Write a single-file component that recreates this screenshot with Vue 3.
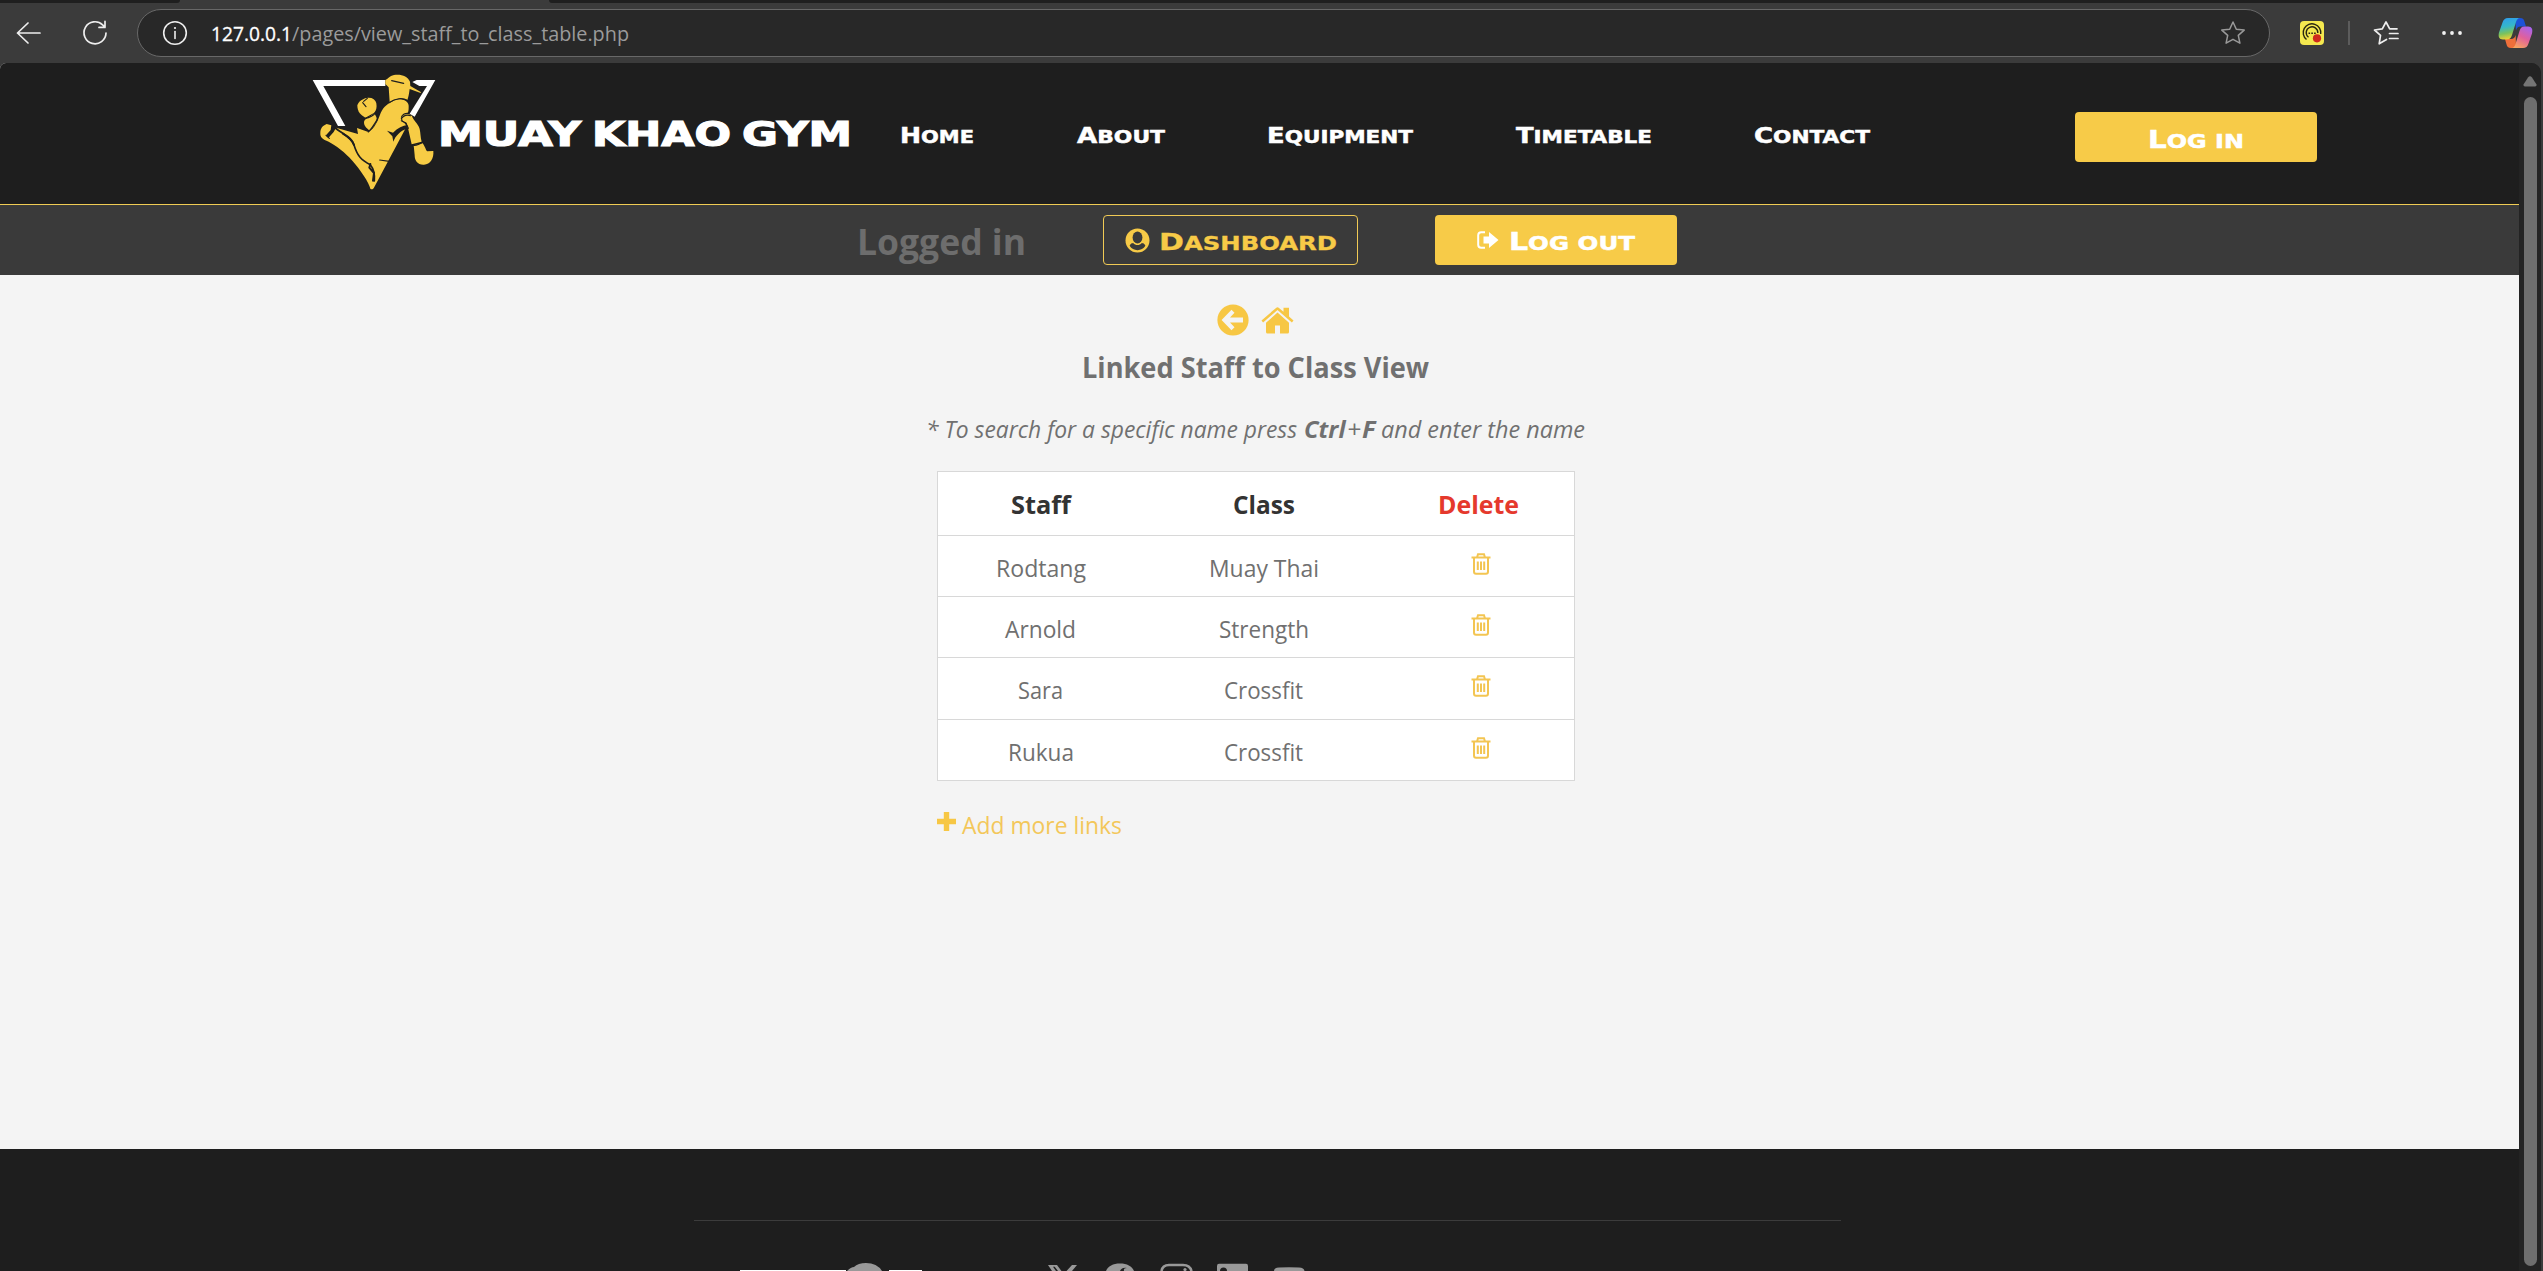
<script setup>
import { h } from 'vue'

const UI = '"Open Sans", "Noto Sans", sans-serif'
const DISPLAY = '"DejaVu Sans", sans-serif'

// One line of text set to an exact width; parts: [text, size, weight]
const FitText = (props) => {
  const { parts, w, hgt = 32, cap, dy = 0, color = '#fff', face = UI, slant = 'normal', heavy = 0 } = props
  return h('svg', { width: w, height: hgt, style: { display: 'block', overflow: 'visible', flex: 'none' } }, [
    h('text', {
      x: 0, y: hgt / 2 + cap / 2 + dy, textLength: w, lengthAdjust: 'spacingAndGlyphs', fill: color,
      stroke: heavy ? color : 'none', 'stroke-width': heavy,
      style: { fontFamily: face, fontStyle: slant, whiteSpace: 'pre' }
    }, parts.map(([t, size, weight = 400]) => h('tspan', { 'font-size': size, 'font-weight': weight }, t)))
  ])
}
FitText.props = ['parts', 'w', 'hgt', 'cap', 'dy', 'color', 'face', 'slant', 'heavy']

const caps = (word) => [[word[0], 21.6, 700], [word.slice(1).toUpperCase(), 18, 700]]

const brand = [
  { word: 'MUAY', w: 143 },
  { word: 'KHAO', w: 139 },
  { word: 'GYM', w: 110 }
]
const hint = [
  { text: '* To search for a specific name press', w: 371, gap: 0, weight: 400 },
  { text: 'Ctrl', w: 41.5, gap: 7, weight: 700 },
  { text: '+', w: 14, gap: 1, weight: 400 },
  { text: 'F', w: 13.5, gap: 1, weight: 700 },
  { text: 'and enter the name', w: 204, gap: 6, weight: 400 }
]
const nav = [
  { label: 'Home', w: 74, gap: 0 },
  { label: 'About', w: 88, gap: 103 },
  { label: 'Equipment', w: 146, gap: 102 },
  { label: 'Timetable', w: 136, gap: 103 },
  { label: 'Contact', w: 116, gap: 102 }
]
const rows = [
  { staff: 'Rodtang', sw: 90, cls: 'Muay Thai', cw: 110 },
  { staff: 'Arnold', sw: 71, cls: 'Strength', cw: 90 },
  { staff: 'Sara', sw: 45, cls: 'Crossfit', cw: 79 },
  { staff: 'Rukua', sw: 66, cls: 'Crossfit', cw: 79 }
]
</script>

<template>
  <div class="window">
    <div class="tabstrip"><i class="strip left"></i><i class="tab"></i><i class="strip right"></i></div>
    <div class="toolbar">
      <svg class="back" width="25" height="24" viewBox="0 0 25 24"><path d="M24 12H1.5M12 2 1.5 12 12 22" fill="none" stroke="#eee" stroke-width="1.7" stroke-linecap="round" stroke-linejoin="round"/></svg>
      <svg class="reload" width="26" height="26" viewBox="0 0 26 26"><path d="M24 13a11 11 0 1 1-3.4-8.2L23 7.2M23 1.4v6h-6" fill="none" stroke="#eee" stroke-width="1.7" stroke-linecap="round" stroke-linejoin="round"/></svg>
      <div class="address">
        <svg width="26" height="26" viewBox="0 0 26 26"><circle cx="13" cy="13" r="11.3" fill="none" stroke="#eee" stroke-width="1.6"/><path d="M13 11.5v7" stroke="#eee" stroke-width="1.6" stroke-linecap="round"/><circle cx="13" cy="8" r="1.1" fill="#eee"/></svg>
        <div class="url">
          <FitText :parts="[['127.0.0.1', 19.8]]" :w="81" :cap="14.5" :dy="1" :heavy="0.3" />
          <FitText :parts="[['/pages/view_staff_to_class_table.php', 19.8]]" :w="337" :cap="14.5" :dy="1" color="#9b9b9b" />
        </div>
        <svg class="star" width="26" height="26" viewBox="0 0 26 26"><path d="M13 2l3.3 7.2 7.9.9-5.9 5.3 1.6 7.8-6.9-3.9-6.9 3.9 1.6-7.8L1.8 10.1l7.9-.9z" fill="none" stroke="#999" stroke-width="1.5" stroke-linejoin="round"/></svg>
      </div>
      <svg class="ext" width="24" height="24" viewBox="0 0 24 24"><rect width="24" height="24" rx="4" fill="#f4e84f"/><path d="M6.500 18.500A8.800 8.800 0 1 1 20.700 13M8.500 16.200A5.800 5.800 0 1 1 17.800 12" fill="none" stroke="#292611" stroke-width="1.400"/><path d="M8.500 12.200h7.500" stroke="#292611" stroke-width="1.600" stroke-dasharray="1.600 1.200"/><circle cx="17" cy="17.300" r="4.100" fill="#cf2a1c"/></svg>
      <i class="divider"></i>
      <svg class="favs" width="26" height="26" viewBox="0 0 26 26"><path d="M13.500 19.500 6.200 23.800 7.500 15.300 1.500 10l7.800-1.200L13 2l3.700 6.800H24M16.500 13.500H25M16.500 18.500H25" fill="none" stroke="#eee" stroke-width="1.700" stroke-linecap="round" stroke-linejoin="round"/></svg>
      <svg class="dots" width="22" height="6" viewBox="0 0 22 6"><g fill="#f2f2f2"><circle cx="3" cy="3" r="1.900"/><circle cx="11" cy="3" r="1.900"/><circle cx="19" cy="3" r="1.900"/></g></svg>
      <svg class="copilot" width="35" height="32" viewBox="0 0 35 32">
        <defs>
          <linearGradient id="cpA" x1="0" y1="0" x2="0.2" y2="1"><stop offset="0" stop-color="#2f9bf0"/><stop offset=".45" stop-color="#35b7c9"/><stop offset=".75" stop-color="#7bc25c"/><stop offset="1" stop-color="#e3cf3a"/></linearGradient>
          <linearGradient id="cpB" x1=".8" y1="0" x2=".3" y2="1"><stop offset="0" stop-color="#a765ee"/><stop offset=".5" stop-color="#e0609c"/><stop offset="1" stop-color="#f6a35f"/></linearGradient>
        </defs>
        <path d="M17 1h5c3 0 4 1.600 4.600 4l1.400 4.500h-5.500c-2.500 0-3.700 1.500-4.500 4z" fill="#1d52d8"/>
        <path d="M18 31h-5c-3 0-4-1.600-4.600-4L7 22h6c2.500 0 4-1.500 4.700-4z" fill="#ee6f3a"/>
        <path d="M10 1h12c-2.200 0-3.300 1.700-4 4l-4 13c-.8 2.500-2 4.500-5 4.500H5c-4 0-5-3-4-7L4.500 5.500C5.500 2.500 7 1 10 1z" fill="url(#cpA)"/>
        <path d="M25 31H13.500c2.200 0 3.300-1.700 4-4l4-13c.8-2.500 2-4.500 5-4.500H30c4 0 5 3 4 7l-3.500 10C29.500 29.500 28 31 25 31z" fill="url(#cpB)"/>
      </svg>
    </div>

    <div class="view">
      <div class="page">
        <header>
          <svg class="logo" width="136" height="128" viewBox="0 0 408 384">
            <path d="M20 36H238V54H52L118 174H96zM332 36H388L326 146 311 137 363 54H340L319 42z" fill="#fff"/>
            <g fill="#f7cc45">
              <path d="M238 36C246 33 250 24 264 21 284 17 306 25 312 41L313 54 343 71 346 76 311 63C309 78 308 86 304 96 288 88 270 91 251 102L248 58 238 48z"/>
              <path d="M154 112C157 101 170 92 182 90 198 88 208 94 211 106 213 118 211 127 205 134L178 149C164 141 154 132 154 112z"/>
              <path d="M174 162C176 151 190 149 205 136L211 147C215 158 206 175 190 187 181 180 174 174 174 162z"/>
              <path d="M90 179 156 198 153 180 187 192C206 183 217 155 224 135 233 115 247 106 267 96 288 90 307 99 308 113 308 123 308 129 305 134 289 133 280 149 287 157 293 163 301 169 301 177L205 357C202 364 197 366 193 362 190 344 160 301 139 278 119 254 87 231 68 221 49 214 42 207 43 195 43 181 50 173 62 168L76 172 74 186 60 202 67 210 83 192z"/>
              <path d="M287 148C294 135 312 136 318 145 322 158 337 168 341 183 344 196 343 208 347 221L317 229 306 180 301 164 290 158z"/>
              <path d="M323 232 350 226C357 236 360 247 363 250L382 249C384 271 373 289 354 290 335 291 326 279 326 262z"/>
            </g>
            <g fill="none" stroke="#1e1e1e" stroke-linecap="round" stroke-linejoin="round">
              <path d="M88 180C107 196 136 208 144 231 154 263 164 275 193 290 202 301 207 317 205 339" stroke-width="5"/>
              <path d="M111 197C129 208 139 215 144 231M193 288 190 299 204 315 201 338" stroke-width="6"/>
              <path d="M257 38 293 46M170 104 180 116M184 91 173 100M60 202 70 211M249 104C268 91 291 87 307 99M178 151C190 150 205 142 209 132M187 192C195 184 205 169 214 154M318 231C328 234 342 228 350 222M221 276 250 280M288 150C292 142 304 139 314 143M286 158 300 166 307 181" stroke-width="3.500"/>
            </g>
            <path d="M243 188 261 194C275 180 291 172 304 171L302 182C283 188 268 204 262 221L259 205z" fill="#1e1e1e"/>
          </svg>
          <div class="brand">
            <FitText v-for="b in brand" :key="b.word" :parts="[[b.word, 33.5, 700]]" :w="b.w" :hgt="40" :cap="24.3" :face="DISPLAY" :heavy="1.2" />
          </div>
          <nav>
            <a v-for="n in nav" :key="n.label" :style="{ marginLeft: n.gap + 'px' }">
              <FitText :parts="caps(n.label)" :w="n.w" :cap="15.7" :dy="1" :face="DISPLAY" :heavy="0.5" />
            </a>
          </nav>
          <a class="btn solid login"><FitText :parts="[['L', 24, 700], ['OG IN', 19.6, 700]]" :w="96" :cap="17.5" :dy="2" :face="DISPLAY" :heavy="0.5" /></a>
        </header>

        <div class="session">
          <FitText class="status" :parts="[['Logged in', 35, 700]]" :w="169" :hgt="50" :cap="25.5" :dy="2" color="#6d6d6d" />
          <a class="btn outline">
            <svg width="25" height="25" viewBox="0 0 25 25"><circle cx="12.5" cy="12.5" r="12" fill="#f7ca47"/><ellipse cx="12.5" cy="9.6" rx="4.9" ry="6" fill="#3a3a3a"/><path d="M4.600 17.800C5.400 15.600 7 15 8.200 15 10.500 17.800 14.500 17.800 16.800 15 18 15 19.600 15.600 20.400 17.800 18.500 20.700 15.800 22.200 12.500 22.200S6.500 20.700 4.600 17.800z" fill="#3a3a3a"/></svg>
            <FitText :parts="[['D', 23.5, 700], ['ASHBOARD', 19, 700]]" :w="178" :cap="17" :dy="1" color="#f7ca47" :face="DISPLAY" :heavy="0.3" />
          </a>
          <a class="btn solid">
            <svg width="22" height="18" viewBox="0 0 22 18"><path d="M8 1.200H4.200Q1.200 1.200 1.200 4.200V13.800Q1.200 16.800 4.200 16.800H8" fill="none" stroke="#fff" stroke-width="2"/><path d="M6.500 5.500H12V1L21.500 9 12 17V12.500H6.500z" fill="#fff"/></svg>
            <FitText :parts="[['L', 24, 700], ['OG OUT', 19.6, 700]]" :w="126" :cap="17" :dy="1" :face="DISPLAY" :heavy="0.5" />
          </a>
        </div>

        <main>
          <div class="shortcuts">
            <svg width="32" height="32" viewBox="0 0 32 32"><circle cx="16" cy="16" r="15.600" fill="#f7c744"/><path d="M14.500 5.800 17.500 8.800 13 13.500H26V18.500H13L17.500 23.200 14.500 26.200 4.600 16z" fill="#f4f4f4"/></svg>
            <svg width="33" height="27" viewBox="0 0 33 27"><path d="M16.500 5.600 28 15.800V25Q28 26.500 26.500 26.500H19V18.500H14V26.500H6.500Q5 26.500 5 25V15.800z" fill="#f7c744"/><path d="M.5 13.500 15 .9Q16.500-.3 18 .9L22.500 4.800V.8H28V9.600L32.500 13.500 30.900 15.400 16.500 3 2.100 15.400z" fill="#f7c744"/></svg>
          </div>
          <FitText class="title" :parts="[['Linked Staff to Class View', 28.6, 700]]" :w="347" :cap="20.3" color="#707070" />
          <div class="hint">
            <FitText v-for="p in hint" :key="p.text" :parts="[[p.text, 23.5, p.weight]]" :w="p.w" :style="{ marginLeft: p.gap + 'px' }" :cap="16.8" :dy="1" color="#707070" slant="italic" />
          </div>
          <div class="table">
            <div class="row head">
              <span><FitText :parts="[['Staff', 24.5, 700]]" :w="60" :cap="17.5" :dy="1.5" color="#333" /></span>
              <span><FitText :parts="[['Class', 24.5, 700]]" :w="62" :cap="17.5" :dy="1.5" color="#333" /></span>
              <span><FitText :parts="[['Delete', 24.5, 700]]" :w="81" :cap="17.5" :dy="1.5" color="#e5392d" /></span>
            </div>
            <div v-for="r in rows" :key="r.staff" class="row">
              <span><FitText :parts="[[r.staff, 23.5]]" :w="r.sw" :cap="16.8" :dy="2.5" color="#707070" /></span>
              <span><FitText :parts="[[r.cls, 23.5]]" :w="r.cw" :cap="16.8" :dy="2.5" color="#707070" /></span>
              <span><svg class="trash" width="20" height="22" viewBox="0 0 20 22"><path d="M.5 4.500H19.500M6 4.500 7 1.300H13L14 4.500M3 4.500V18.500Q3 20.800 5 20.800H15Q17 20.800 17 18.500V4.500M6.800 8.500V17M10 8.500V17M13.200 8.500V17" fill="none" stroke="#f3c552" stroke-width="2"/></svg></span>
            </div>
          </div>
          <a class="add">
            <svg width="19" height="19" viewBox="0 0 19 19"><path d="M6.800 0H12.200V6.800H19V12.200H12.200V19H6.800V12.200H0V6.800H6.800z" fill="#f7c744"/></svg>
            <FitText :parts="[['Add more links', 23.5]]" :w="160" :cap="16.8" :dy="1" color="#f3c75a" />
          </a>
        </main>

        <footer>
          <i class="rule"></i>
          <div class="foot">
            <svg class="footlogo" width="184" height="8" viewBox="0 0 184 8"><path d="M0 7H106V8H0zM149 7H182V8H149z" fill="#fff"/><path d="M107 8Q111 4 114 4 118 0 126 0 137 0 142 8z" fill="#999"/></svg>
            <svg class="social" width="258" height="8" viewBox="0 0 258 8">
              <g fill="#999"><path d="M0 2H9L13.500 8H10L6.700 3.700H5L8 8H4zM24 2H29L24 8H18.500z"/><path d="M58 8C60 3 65 .5 72 .5S84 3 86 8H76Q75 5 79 5 74 4 72 8z"/><path d="M169 3Q169 .8 171 .8H198Q200 .8 200 3V8H179A3 3 0 1 0 172 8H169z"/><path d="M226 8Q226 4.500 231 4.500 241 4 251 4.500 256 4.500 256.500 8z"/></g>
              <path d="M113.500 8Q114.500 2 121 2H135Q142 2 143.500 8" fill="none" stroke="#999" stroke-width="2.600"/><circle cx="137" cy="6.500" r="1.600" fill="#999"/>
            </svg>
          </div>
        </footer>
      </div>
      <div class="scroll">
        <svg width="14" height="11" viewBox="0 0 14 11"><path d="M5 1.500Q7-1 9 1.500L13.500 8.500Q14 10.500 12 10.500H2Q0 10.500.5 8.500z" fill="#757575"/></svg>
        <i class="thumb"></i>
      </div>
    </div>
  </div>
</template>

<style>
body { margin: 0; background: #3b3b3b; overflow: hidden; }
</style>

<style scoped>
* { box-sizing: border-box; }
svg { display: block; flex: none; overflow: visible; }
.window { width: 2543px; height: 1271px; display: flex; flex-direction: column; background: #3b3b3b; overflow: hidden; }
.tabstrip { display: flex; height: 3px; flex: none; }
.strip { background: #1f1f1f; }
.left { width: 180px; border-bottom-right-radius: 3px; }
.tab { width: 369px; }
.right { flex: 1; border-bottom-left-radius: 3px; }
.toolbar { height: 60px; flex: none; display: flex; align-items: center; padding-left: 16px; }
.reload { margin-left: 41px; }
.address { width: 2133px; height: 48px; margin-left: 29px; border: 1.5px solid #686868; border-radius: 24px; background: #282828; display: flex; align-items: center; padding: 0 23px 0 24px; }
.url { display: flex; margin-left: 23px; flex: 1; }
.ext { margin-left: 30px; }
.divider { width: 2px; height: 24px; margin-left: 24px; background: #5c5c5c; }
.favs { margin-left: 23px; }
.dots { margin-left: 42px; }
.copilot { margin-left: 35px; }
.view { display: flex; width: 2541px; height: 1208px; border-radius: 6px 10px 0 0; overflow: hidden; background: #222; }
.page { width: 2519px; display: flex; flex-direction: column; background: #f4f4f4; }
header { height: 142px; flex: none; display: flex; align-items: center; padding-left: 306px; background: #1e1e1e; border-bottom: 1px solid #f0cc54; }
.logo { margin-top: -4px; }
.brand { display: flex; gap: 11px; margin-left: -4px; }
nav { display: flex; margin-left: 48px; }
.btn { height: 50px; flex: none; display: flex; align-items: center; justify-content: center; border-radius: 4px; }
.solid { width: 242px; background: #f7cb48; }
.login { margin: 7px 0 0 205px; }
.session { height: 70px; flex: none; display: flex; align-items: center; padding-left: 857px; background: #3a3a3a; }
.outline { width: 255px; margin: 0 77px; border: 1px solid #f0ca55; gap: 9px; }
.session .solid { gap: 10px; }
main { flex: 1; display: flex; flex-direction: column; align-items: center; padding-right: 8px; }
.shortcuts { display: flex; align-items: center; gap: 12px; height: 32px; margin-top: 29px; }
.title { margin-top: 16px; }
.hint { display: flex; margin-top: 29px; }
.table { width: 638px; margin-top: 26px; border: 1px solid #d8d8d8; background: #fff; }
.row { display: flex; height: 61.2px; border-top: 1px solid #d8d8d8; }
.row.head { height: 63px; border-top: 0; }
.row span { display: flex; align-items: center; justify-content: center; width: 191px; }
.row span:first-child { width: 206px; }
.row span:nth-child(2) { width: 240px; }
.row span:nth-child(3) { width: 190px; }
.trash { margin: -4px 0 0 5px; }
.add { width: 638px; display: flex; align-items: center; gap: 6px; margin-top: 28px; }
.add svg:first-child { margin-top: -7px; }
footer { height: 122px; flex: none; background: #1e1e1e; overflow: hidden; }
.rule { display: block; width: 1147px; height: 1px; margin: 71px 0 0 694px; background: #3c3c3c; }
.foot { display: flex; margin-top: 42px; padding-left: 740px; }
.social { margin-left: 124px; }
.scroll { width: 22px; display: flex; flex-direction: column; align-items: center; padding: 13px 0 5px; background: #232323; }
.thumb { width: 13px; flex: 1; margin-top: 10px; border-radius: 7px; background: #6e6e6e; }
</style>
